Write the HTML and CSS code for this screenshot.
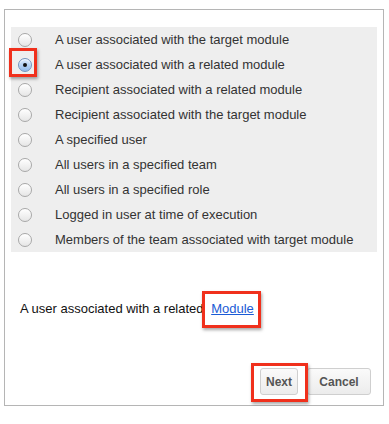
FILE: index.html
```html
<!DOCTYPE html>
<html>
    <head>
        <meta charset="utf-8">
        <title>Recipient</title>
        <link rel="stylesheet" href="styles.css">
    </head>
    <body>
        <div class="dialog">
            <div class="options">
                <div class="option"><span class="radio"></span><span class="label">A user associated with the target module</span></div>
                <div class="option"><span class="radio-mark"><span class="radio checked"></span></span><span class="label">A user associated with a related module</span></div>
                <div class="option"><span class="radio"></span><span class="label">Recipient associated with a related module</span></div>
                <div class="option"><span class="radio"></span><span class="label">Recipient associated with the target module</span></div>
                <div class="option"><span class="radio"></span><span class="label">A specified user</span></div>
                <div class="option"><span class="radio"></span><span class="label">All users in a specified team</span></div>
                <div class="option"><span class="radio"></span><span class="label">All users in a specified role</span></div>
                <div class="option"><span class="radio"></span><span class="label">Logged in user at time of execution</span></div>
                <div class="option"><span class="radio"></span><span class="label">Members of the team associated with target module</span></div>
            </div>
            <div class="summary">A user associated with a related <a href="#" class="mark module-link">Module</a></div>
            <div class="buttons">
                <button class="btn mark next">Next</button>
                <button class="btn">Cancel</button>
            </div>
        </div>
    </body>
</html>
```

FILE: styles.css
```css
body {
    margin: 0;
    background: #fff;
    font-family: "Liberation Sans", Arial, sans-serif;
    font-size: 13px;
    color: #222;
}

.dialog {
    margin: 9px 0 0 4px;
    width: 378px;
    height: 395px;
    border: 1px solid #b5b5b5;
    display: flex;
    flex-direction: column;
}

.options {
    margin: 17px 6px 0 6px;
    background: #eeeeee;
}

.option {
    height: 25px;
    display: flex;
    align-items: center;
    padding-left: 7px;
}

.label {
    margin-left: 23px;
    color: #333;
}

.radio {
    display: inline-block;
    box-sizing: border-box;
    width: 14px;
    height: 14px;
    border-radius: 50%;
    border: 1px solid #a8a8a8;
    background: linear-gradient(#ffffff, #e6e6e6);
    box-shadow: inset 0 1px 1px rgba(255,255,255,0.8);
    position: relative;
}

.radio.checked {
    border-color: #7494bd;
    background: linear-gradient(#dbeafb, #92bbec);
}

.radio.checked::after {
    content: "";
    position: absolute;
    left: 4px;
    top: 4px;
    width: 4px;
    height: 4px;
    border-radius: 50%;
    background: #111;
}

.radio-mark {
    display: inline-flex;
    position: relative;
}

.radio-mark::after {
    content: "";
    position: absolute;
    left: -9px;
    top: -10px;
    width: 28px;
    height: 29px;
    box-sizing: border-box;
    border: 3px solid #f0301c;
    box-shadow: 1px 2px 3px rgba(0,0,0,0.35);
}

.summary {
    margin: 47px 0 0 15px;
    line-height: 20px;
    color: #111;
}

.module-link {
    color: #1a5bd6;
    text-decoration: underline;
    margin-left: 4px;
}

.mark {
    position: relative;
}

.module-link::after {
    content: "";
    position: absolute;
    left: -9px;
    top: -10px;
    width: 59px;
    height: 37px;
    box-sizing: border-box;
    border: 3px solid #f0301c;
    box-shadow: 1px 2px 3px rgba(0,0,0,0.35);
}

.buttons {
    margin-top: auto;
    padding: 0 12px 10px 0;
    display: flex;
    justify-content: flex-end;
    gap: 9px;
}

.btn {
    height: 27px;
    border: 1px solid #cfcfcf;
    border-radius: 3px;
    background: linear-gradient(#fafafa, #ececec);
    font-family: "Liberation Sans", Arial, sans-serif;
    font-size: 12px;
    font-weight: bold;
    color: #555;
    padding: 0;
}

.next {
    width: 38px;
}

.btn:last-child {
    width: 64px;
}

.next::after {
    content: "";
    position: absolute;
    left: -10px;
    top: -6px;
    width: 57px;
    height: 39px;
    box-sizing: border-box;
    border: 3px solid #f0301c;
    box-shadow: 1px 2px 3px rgba(0,0,0,0.35);
}
```
